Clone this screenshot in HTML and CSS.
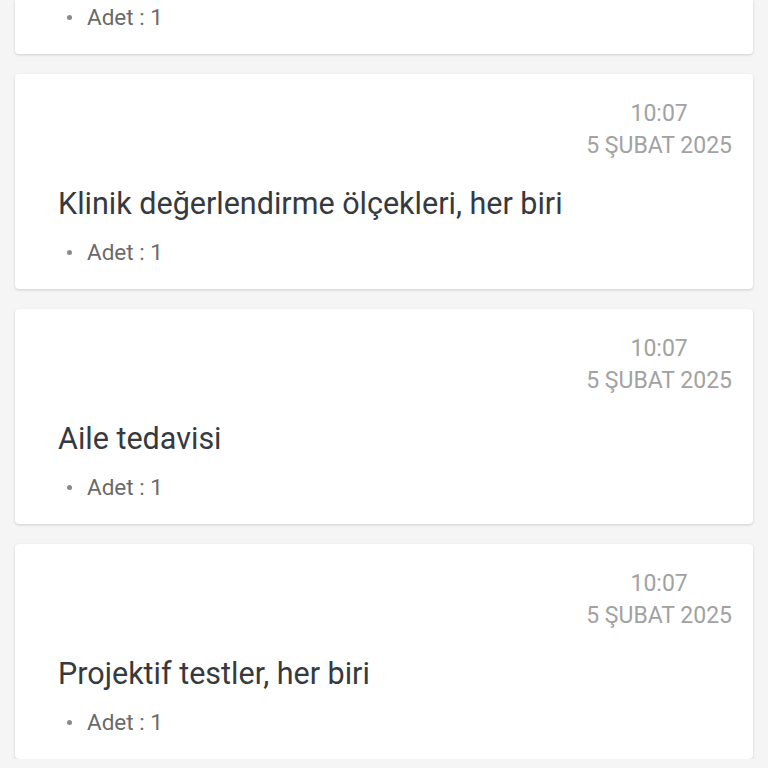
FILE: index.html
```html
<!DOCTYPE html>
<html lang="tr">
<head>
    <meta charset="UTF-8" />
    <meta name="viewport" content="width=device-width, initial-scale=1.0"/>
    <title>İşlemler</title>
    <link rel="stylesheet" href="styles.css">
</head>
<body>
    <div class="list">
        <div class="card card-cut">
            <ul class="details">
                <li><span class="dot"></span>Adet : 1</li>
            </ul>
        </div>
        <div class="card">
            <div class="stamp">
                <span>10:07</span>
                <span>5 ŞUBAT 2025</span>
            </div>
            <h2 class="title">Klinik değerlendirme ölçekleri, her biri</h2>
            <ul class="details">
                <li><span class="dot"></span>Adet : 1</li>
            </ul>
        </div>
        <div class="card">
            <div class="stamp">
                <span>10:07</span>
                <span>5 ŞUBAT 2025</span>
            </div>
            <h2 class="title">Aile tedavisi</h2>
            <ul class="details">
                <li><span class="dot"></span>Adet : 1</li>
            </ul>
        </div>
        <div class="card">
            <div class="stamp">
                <span>10:07</span>
                <span>5 ŞUBAT 2025</span>
            </div>
            <h2 class="title">Projektif testler, her biri</h2>
            <ul class="details">
                <li><span class="dot"></span>Adet : 1</li>
            </ul>
        </div>
    </div>
</body>
</html>
```

FILE: styles.css
```css
* {
    margin: 0;
    padding: 0;
    box-sizing: border-box;
    font-family: Roboto, 'Noto Sans', sans-serif;
}

:root {
    --bg-color: #f5f5f5;
    --card-color: #fff;
    --title-color: #363a40;
    --detail-color: #6a6a6a;
    --stamp-color: #a2a2a2;
}

body {
    background: var(--bg-color);
    overflow: hidden;
}

.list {
    display: flex;
    flex-direction: column;
    gap: 20px;
    padding: 0 15px;
}

.card {
    background: var(--card-color);
    border-radius: 4px;
    box-shadow: 0 1px 3px rgba(0, 0, 0, 0.16);
    padding: 24px 21px 21px 43px;
    display: flex;
    flex-direction: column;
}

.card-cut {
    padding-top: 1px;
    border-radius: 0 0 4px 4px;
}

.stamp {
    align-self: flex-end;
    display: flex;
    flex-direction: column;
    align-items: center;
    font-size: 23px;
    line-height: 32px;
    color: var(--stamp-color);
}

.title {
    margin-top: 22px;
    font-size: 30.5px;
    line-height: 40px;
    font-weight: 400;
    color: var(--title-color);
}

.details {
    list-style: none;
    margin-top: 12px;
}

.card-cut .details {
    margin-top: 0;
}

.details li {
    display: flex;
    align-items: center;
    font-size: 22.5px;
    line-height: 32px;
    color: var(--detail-color);
}

.dot {
    width: 5px;
    height: 5px;
    border-radius: 50%;
    background: #8a8a8a;
    margin: 0 15px 0 9px;
}
```
